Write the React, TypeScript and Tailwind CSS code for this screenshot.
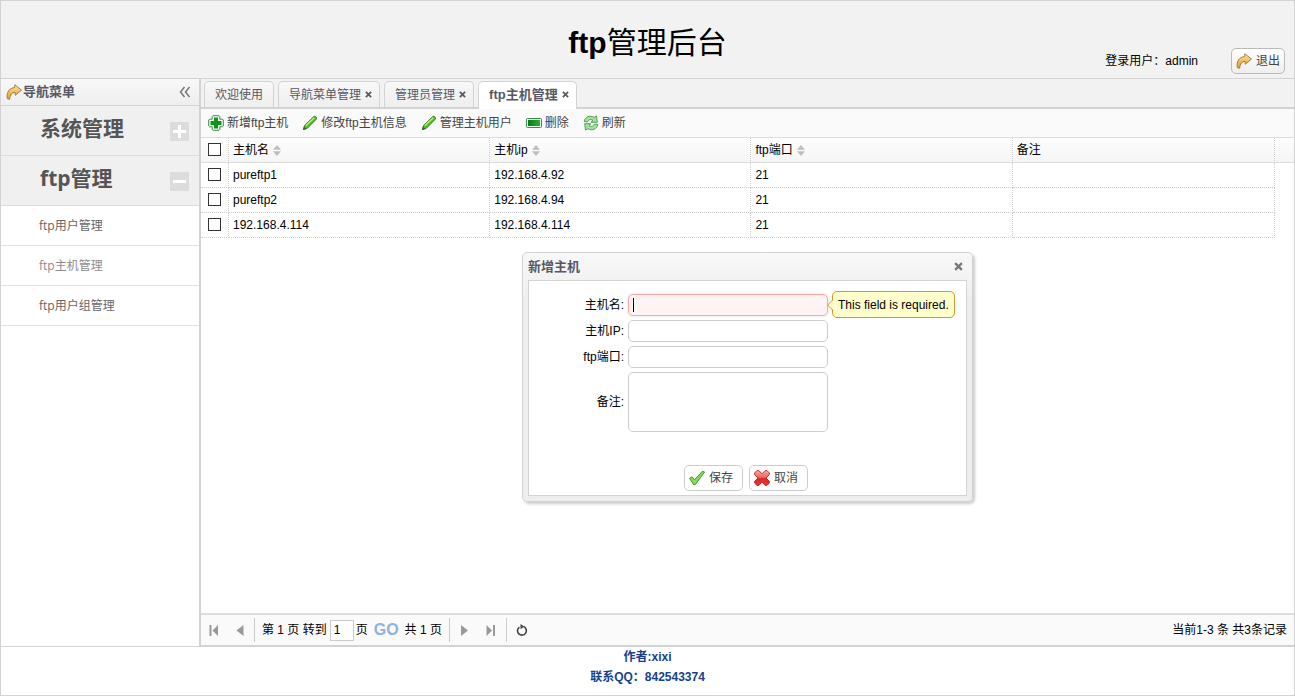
import { useState, type ReactNode } from "react";

const cjk = "font-['Liberation_Sans','Noto_Sans_CJK_SC',sans-serif]";
const humanist = "font-['Open_Sans','Noto_Sans_CJK_SC',sans-serif]";

function ArrowIcon() {
  return (
    <svg className="size-4 shrink-0" viewBox="0 0 16 16" aria-hidden="true">
      <defs>
        <linearGradient id="arrowFill" x1="0" y1="0" x2="0" y2="1">
          <stop offset="0" stopColor="#fde9b0" />
          <stop offset="0.5" stopColor="#f8bc4c" />
          <stop offset="1" stopColor="#ef9a1c" />
        </linearGradient>
      </defs>
      <path
        d="M8.800 .7 15.500 6.100 9.300 11.300 9.100 8.400C6 8.300 4.300 10.500 3.600 15.300L1.300 14.600C.2 8.500 3.200 3.900 8.700 3.600Z"
        fill="url(#arrowFill)"
        stroke="#8d7655"
        strokeWidth="0.9"
        strokeLinejoin="round"
      />
    </svg>
  );
}

function AddIcon() {
  return (
    <svg className="size-4 shrink-0" viewBox="0 0 16 16" aria-hidden="true">
      <path
        d="M5 .7h6l.8.8v2.700h2.700l.8.800v6l-.8.800h-2.700v2.700l-.8.800H5l-.8-.8v-2.700H1.500L.7 11V5l.8-.8h2.700V1.500Z"
        fill="#f2fbf2"
        stroke="#3c8a4c"
      />
      <path d="M6 2.500h4V6h3.500v4H10v3.500H6V10H2.500V6H6Z" fill="#10951a" />
    </svg>
  );
}

function PencilIcon() {
  return (
    <svg className="size-4 shrink-0" viewBox="0 0 16 16" aria-hidden="true">
      <path d="m1.500 14.500 1-4L11.500 1.800c.8-.8 1.800-.6 2.500.1s.9 1.700.1 2.500L5.300 13.300Z" fill="#4fbe20" stroke="#2c7d16" strokeWidth="0.9" strokeLinejoin="round" />
      <path d="M3.800 10.800 12.300 2.700" stroke="#b9f088" strokeWidth="1.500" />
      <path d="m1 15 .9-3.300L4.400 14Z" fill="#3d5a36" />
    </svg>
  );
}

function RemoveIcon() {
  return (
    <svg className="size-4 shrink-0" viewBox="0 0 16 16" aria-hidden="true">
      <defs>
        <linearGradient id="removeFill" x1="0" y1="0" x2="1" y2="0">
          <stop offset="0" stopColor="#067d12" />
          <stop offset="1" stopColor="#2fae35" />
        </linearGradient>
      </defs>
      <rect x="0.5" y="3.500" width="15" height="9" rx="1" fill="#effaef" stroke="#3c8a4c" />
      <rect x="2" y="5" width="12" height="6" fill="url(#removeFill)" />
    </svg>
  );
}

function ReloadIcon() {
  const half = "M1.200 6.700C1.700 1.900 7-.3 11.100 2.300L13.500.9 14.300 7.300H8L10 5.500C7.800 3.900 5.300 4.600 4.500 6.900Z";
  return (
    <svg className="size-4 shrink-0" viewBox="0 0 16 16" aria-hidden="true">
      <g fill="#a5dfa0" stroke="#459a50" strokeWidth="0.9" strokeLinejoin="round">
        <path d={half} />
        <path d={half} transform="rotate(180 8 8)" />
      </g>
    </svg>
  );
}

function OkIcon() {
  return (
    <svg className="size-4 shrink-0" viewBox="0 0 16 16" aria-hidden="true">
      <path
        d="M.6 8.300 3 6.800 5.600 9.800 13.300 1.300 15.600 2 6.200 14.700 4.500 14.500Z"
        fill="#86e04f"
        stroke="#2b8a35"
        strokeWidth="0.9"
        strokeLinejoin="round"
      />
    </svg>
  );
}

function CancelIcon() {
  return (
    <svg className="size-4 shrink-0" viewBox="0 0 16 16" aria-hidden="true">
      <defs>
        <linearGradient id="cancelFill" x1="0" y1="0" x2="0" y2="1">
          <stop offset="0" stopColor="#f9aaa4" />
          <stop offset="0.45" stopColor="#f0655f" />
          <stop offset="0.55" stopColor="#e02421" />
          <stop offset="1" stopColor="#ea3a35" />
        </linearGradient>
      </defs>
      <path
        d="M3 .6H4.800L8 3.800 11.200.6H13L15.400 3V4.600L12 8 15.400 11.400V13L13 15.400H11.200L8 12.200 4.800 15.400H3L.6 13V11.400L4 8 .6 4.600V3Z"
        fill="url(#cancelFill)"
        stroke="#c1201f"
        strokeWidth="0.9"
        strokeLinejoin="round"
      />
    </svg>
  );
}

function CloseGlyph({ className }: { className: string }) {
  return (
    <svg className={className} viewBox="0 0 8 8" aria-hidden="true">
      <path d="M1 1 7 7M7 1 1 7" stroke="currentColor" strokeWidth="2" />
    </svg>
  );
}

function SortIcon() {
  return (
    <svg className="h-[11px] w-2 shrink-0" viewBox="0 0 8 11" aria-hidden="true">
      <path d="M4 0 8 4.700H0ZM4 11 0 6.300H8Z" fill="#bdbdbd" />
    </svg>
  );
}

function ToolButton({ icon, children }: { icon: ReactNode; children: ReactNode }) {
  return (
    <button type="button" className="flex h-[26px] items-center gap-[3px] px-[7px] text-[#444]">
      {icon}
      {children}
    </button>
  );
}

function BoxButton({ icon, children, className }: { icon: ReactNode; children: ReactNode; className: string }) {
  return (
    <button
      type="button"
      className={`flex h-[26px] items-center gap-1 rounded-[5px] border pl-1 text-[#444] ${className}`}
    >
      {icon}
      {children}
    </button>
  );
}

function Check({ label }: { label: string }) {
  return (
    <input
      type="checkbox"
      aria-label={label}
      className="mx-auto mb-0.5 block size-[13px] appearance-none border border-[#333] bg-white checked:bg-[#333]"
    />
  );
}

const tabs = ["欢迎使用", "导航菜单管理", "管理员管理", "ftp主机管理"];
const hosts = [
  ["pureftp1", "192.168.4.92", "21", ""],
  ["pureftp2", "192.168.4.94", "21", ""],
  ["192.168.4.114", "192.168.4.114", "21", ""],
];
const columns = ["主机名", "主机ip", "ftp端口", "备注"];
const menu = ["ftp用户管理", "ftp主机管理", "ftp用户组管理"];

function Sidebar() {
  return (
    <aside className="flex w-[200px] shrink-0 flex-col border-x border-[#d3d3d3] bg-white">
      <div className="flex h-[27px] items-center border-b border-[#d3d3d3] bg-linear-to-b from-[#f8f8f8] to-[#eee] pl-[5px] pr-2 text-[13px] font-bold text-[#575765]">
        <ArrowIcon />
        <span className="ml-px flex-1">导航菜单</span>
        <button type="button" aria-label="折叠" className="text-[#777]">
          <svg className="size-3" viewBox="0 0 12 12" fill="none" stroke="currentColor" strokeWidth="1.500" aria-hidden="true">
            <path d="M5.500 1 1.500 6 5.500 11M10.500 1 6.500 6 10.500 11" />
          </svg>
        </button>
      </div>
      {["系统管理", "ftp管理"].map((name, i) => (
        <button
          key={name}
          type="button"
          className={`flex h-[50px] items-center border-b border-[#ddd] bg-[#f0f0f0] pb-1.5 pl-[39px] pr-2.5 text-[21px] font-bold text-[#555] ${humanist}`}
        >
          <span className="flex-1 text-left">{name}</span>
          <svg className="mt-2 size-[19px]" viewBox="0 0 19 19" aria-hidden="true">
            <rect width="19" height="19" fill="#dcdcdc" />
            <path d={i === 0 ? "M3 8h13v3H3ZM8 3h3v13H8Z" : "M3 8h13v3H3Z"} fill="#fff" />
          </svg>
        </button>
      ))}
      <nav>
        {menu.map((name, i) => (
          <a
            key={name}
            href="#"
            className={`flex h-[40px] items-center border-b border-[#e0e0e0] pl-[38px] ${humanist} ${
              i === 1 ? "text-[#8c8c8c]" : "text-[#666]"
            }`}
          >
            {name}
          </a>
        ))}
      </nav>
    </aside>
  );
}

function Tabs() {
  const [active, setActive] = useState(3);
  return (
    <div className="flex h-[30px] items-end gap-1 border-b-2 border-[#d3d3d3] bg-[#f2f2f2] pl-[3px]">
      {tabs.map((name, i) => (
        <div
          key={name}
          className={`flex items-center rounded-t-[5px] border border-b-0 border-[#d3d3d3] text-[#575765] ${
            i === active
              ? "-mb-0.5 h-7 bg-white pb-0.5 text-[13px] font-bold"
              : "h-[26px] bg-linear-to-b from-[#f8f8f8] to-[#eee]"
          }`}
        >
          <button type="button" onClick={() => setActive(i)} className={i === 0 ? "px-2.5" : "pl-2.5"}>
            {name}
          </button>
          {i > 0 && (
            <button type="button" aria-label={`关闭${name}`} className="pl-1 pr-[7px]">
              <CloseGlyph className="size-[7px]" />
            </button>
          )}
        </div>
      ))}
    </div>
  );
}

function HostTable() {
  const dotted = "border-r border-dotted border-[#ccc]";
  return (
    <table className="w-full table-fixed border-separate border-spacing-0 text-left text-black">
      <colgroup>
        <col className="w-7" />
        <col className="w-[23.9%]" />
        <col className="w-[23.9%]" />
        <col className="w-[23.9%]" />
        <col />
        <col className="w-[19px]" />
      </colgroup>
      <thead>
        <tr className="h-[25px] bg-linear-to-b from-[#fdfdfd] to-[#f5f5f5]">
          <th className={`p-0 ${dotted} border-b [border-bottom-style:solid] border-b-[#ddd]`}>
            <Check label="全选" />
          </th>
          {columns.map((name, i) => (
            <th key={name} className={`px-1 py-0 font-normal ${dotted} border-b [border-bottom-style:solid] border-b-[#ddd]`}>
              <span className="flex items-center gap-1">
                {name}
                {i < 3 && <SortIcon />}
              </span>
            </th>
          ))}
          <td className="border-b border-[#ddd] p-0" />
        </tr>
      </thead>
      <tbody>
        {hosts.map((row) => (
          <tr key={row[0]} className="h-[25px]">
            <td className={`border-b p-0 ${dotted}`}>
              <Check label={`选择${row[0]}`} />
            </td>
            {row.map((cell, i) => (
              <td key={i} className={`border-b px-1 py-0 ${dotted}`}>
                {cell}
              </td>
            ))}
            <td className="p-0" />
          </tr>
        ))}
      </tbody>
    </table>
  );
}

function PageButton({ label, children }: { label: string; children: ReactNode }) {
  return (
    <button type="button" aria-label={label} className="flex size-[26px] items-center justify-center text-[#999]">
      <svg className="size-[11px]" viewBox="0 0 11 11" fill="currentColor" aria-hidden="true">
        {children}
      </svg>
    </button>
  );
}

function Pager() {
  const divider = <span className="h-6 w-px bg-[#ccc]" />;
  return (
    <div className="flex h-[32px] items-center border-t-2 border-[#ddd] bg-[#fafafa] pr-[7px] text-black">
      <PageButton label="首页">
        <path d="M.5 0H2.500V11H.5ZM9 0V11L3.500 5.500Z" />
      </PageButton>
      <PageButton label="上一页">
        <path d="M8.500 0V11L1.500 5.500Z" />
      </PageButton>
      <span className="w-px" />
      {divider}
      <span className="ml-[7px] flex items-center">
        <label htmlFor="page" className="whitespace-pre">第 1 页 转到</label>
        <input id="page" defaultValue="1" className="ml-[3px] h-[21px] w-6 border border-[#ccc] bg-white px-[3px] outline-none" />
        <span className="ml-0.5">页</span>
        <button type="button" className="mx-1.5 text-base font-bold text-[#8db2e9]">GO</button>
        <span>共 1 页</span>
      </span>
      <span className="w-[7px]" />
      {divider}
      <span className="w-0.5" />
      <PageButton label="下一页">
        <path d="M2 0V11L9 5.500Z" />
      </PageButton>
      <PageButton label="末页">
        <path d="M1.500 0V11L7 5.500ZM8 0H10V11H8Z" />
      </PageButton>
      <span className="w-0.5" />
      {divider}
      <button type="button" aria-label="刷新" className="ml-0.5 flex size-[26px] items-center justify-center text-[#444]">
        <svg className="size-3" viewBox="0 0 12 12" fill="none" aria-hidden="true">
          <path d="M7.500 2.600A4.400 4.400 0 1 1 3.400 3.100" stroke="currentColor" strokeWidth="1.600" />
          <path d="M4.500 0 8.200 2.600 4.500 5.200Z" fill="currentColor" />
        </svg>
      </button>
      <span className="ml-auto">当前1-3 条 共3条记录</span>
    </div>
  );
}

function HostDialog() {
  const label = "w-[95px] shrink-0 text-right";
  const field = "w-[200px] rounded-[5px] border border-[#ccc] bg-white px-1 outline-none";
  return (
    <div
      role="dialog"
      aria-labelledby="dialog-title"
      className="absolute inset-x-0 top-[173px] mx-auto w-[451px] rounded-[5px] border border-[#d3d3d3] bg-linear-to-b from-[#f8f8f8] to-[#eee] to-20% px-[5px] pb-[5px] shadow-[2px_2px_3px_#ccc]"
    >
      <div className="flex h-[27px] items-center justify-between pr-1 text-[13px] font-bold text-[#575765]">
        <h2 id="dialog-title">新增主机</h2>
        <button type="button" aria-label="关闭" className="text-[#777]">
          <CloseGlyph className="size-[9px]" />
        </button>
      </div>
      <form className="border border-[#d3d3d3] bg-white pb-1 pt-[13px] text-black">
        <div className="flex flex-col gap-1">
          <div className="flex items-center gap-1">
            <label htmlFor="host" className={label}>主机名:</label>
            <div className="relative">
              <input
                id="host"
                aria-describedby="host-tip"
                className="block h-[22px] w-[200px] rounded-[5px] border border-[#ffa8a8] bg-[#fff3f3] px-1 shadow-[0_0_3px_#ddd] outline-none"
              />
              <span className="absolute left-[5px] top-1 h-3.5 w-px bg-black" />
              <div
                id="host-tip"
                role="tooltip"
                className="absolute -top-[3px] left-full ml-1 flex h-[27px] items-center whitespace-nowrap rounded-[5px] border border-[#cc9933] bg-[#ffffcc] px-[5px]"
              >
                <svg className="absolute -left-1.5 top-[7px] h-3 w-[7px]" viewBox="0 0 7 12" aria-hidden="true">
                  <path d="M7 0 .7 6 7 12Z" fill="#ffffcc" />
                  <path d="M6 .5 .7 6 6 11.500" fill="none" stroke="#cc9933" />
                </svg>
                This field is required.
              </div>
            </div>
          </div>
          <div className="flex items-center gap-1">
            <label htmlFor="ip" className={label}>主机IP:</label>
            <input id="ip" className={`h-[22px] ${field}`} />
          </div>
          <div className="flex items-center gap-1">
            <label htmlFor="port" className={label}>ftp端口:</label>
            <input id="port" className={`h-[22px] ${field}`} />
          </div>
          <div className="flex items-center gap-1">
            <label htmlFor="note" className={label}>备注:</label>
            <textarea id="note" className={`block h-[60px] resize-none ${field}`} />
          </div>
        </div>
        <div className="mt-[33px] flex justify-center gap-1.5 pr-[3px]">
          <BoxButton icon={<OkIcon />} className="border-[#ccc] bg-white pr-[9px]">保存</BoxButton>
          <BoxButton icon={<CancelIcon />} className="border-[#ccc] bg-white pr-[9px]">取消</BoxButton>
        </div>
      </form>
    </div>
  );
}

export default function App() {
  return (
    <div className={`flex min-h-screen flex-col bg-white text-xs ${cjk}`}>
      <header className="relative flex h-[79px] items-center justify-center border border-[#d3d3d3] bg-[#f2f2f2] text-black">
        <h1 className="mt-1.5 text-[30px] leading-9">
          <b>ftp</b>管理后台
        </h1>
        <div className="absolute bottom-1 right-[9px] flex items-center gap-[33px]">
          <span>登录用户：admin</span>
          <BoxButton icon={<ArrowIcon />} className="border-[#bbb] bg-linear-to-b from-white to-[#eee] pr-1">退出</BoxButton>
        </div>
      </header>
      <div className="flex flex-1">
        <Sidebar />
        <main className="relative flex min-w-0 flex-1 flex-col border-x border-b border-[#d3d3d3]">
          <Tabs />
          <div className="flex h-[29px] items-center border-b border-[#ddd] bg-[#fafafa]">
            <ToolButton icon={<AddIcon />}>新增ftp主机</ToolButton>
            <ToolButton icon={<PencilIcon />}>修改ftp主机信息</ToolButton>
            <ToolButton icon={<PencilIcon />}>管理主机用户</ToolButton>
            <ToolButton icon={<RemoveIcon />}>删除</ToolButton>
            <ToolButton icon={<ReloadIcon />}>刷新</ToolButton>
          </div>
          <div className="flex-1">
            <HostTable />
          </div>
          <Pager />
          <HostDialog />
        </main>
      </div>
      <footer className="h-[50px] border border-[#d3d3d3] text-center font-bold leading-5 text-[#15428b]">
        <p>作者:xixi</p>
        <p>联系QQ：842543374</p>
      </footer>
    </div>
  );
}
